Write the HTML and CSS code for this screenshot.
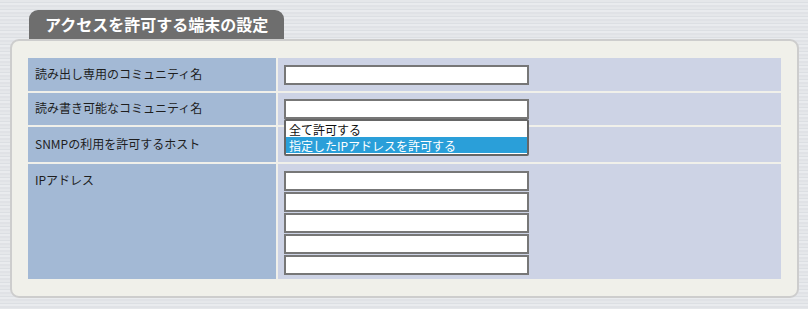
FILE: index.html
```html
<!DOCTYPE html>
<html lang="ja">

<head>
    <meta charset="UTF-8">
    <meta name="viewport" content="width=device-width, initial-scale=1.0">
    <title>アクセスを許可する端末の設定</title>
    <link rel="stylesheet" href="styles.css">
</head>

<body>
    <div class="page">
        <h2 class="tab">アクセスを許可する端末の設定</h2>
        <div class="panel">
            <div class="settings">
                <div class="label">読み出し専用のコミュニティ名</div>
                <div class="value">
                    <input type="text" class="input" />
                </div>

                <div class="label">読み書き可能なコミュニティ名</div>
                <div class="value">
                    <input type="text" class="input" />
                </div>

                <div class="label">SNMPの利用を許可するホスト</div>
                <div class="value value-top">
                    <select class="listbox" size="2">
                        <option>全て許可する</option>
                        <option selected>指定したIPアドレスを許可する</option>
                    </select>
                </div>

                <div class="label label-top">IPアドレス</div>
                <div class="value value-list">
                    <input type="text" class="input" />
                    <input type="text" class="input" />
                    <input type="text" class="input" />
                    <input type="text" class="input" />
                    <input type="text" class="input" />
                </div>
            </div>
        </div>
    </div>
</body>

</html>
```

FILE: styles.css
```css
body {
    margin: 0;
    font-family: "Noto Sans CJK JP", "Liberation Sans", sans-serif;
    font-size: 12px;
    color: #1e1e1e;
    background: repeating-linear-gradient(180deg,
            #e5e7ea 0, #e5e7ea 2px,
            #dcdfe3 2px, #dcdfe3 3px,
            #e9ebee 3px, #e9ebee 5px,
            #e0e2e6 5px, #e0e2e6 7px);
    height: 309px;
}

.page {
    padding-top: 10px;
}

.tab {
    margin: 0 0 0 29px;
    width: 255px;
    height: 29px;
    box-sizing: border-box;
    padding-left: 16px;
    background: #6e6e6e;
    border-radius: 9px 9px 0 0;
    color: #fff;
    font-size: 16px;
    font-weight: bold;
    line-height: 29px;
    position: relative;
    z-index: 1;
}

.panel {
    width: 789px;
    margin-left: 10px;
    box-sizing: border-box;
    background: #f0f0ea;
    border: 2px solid #cdcdcd;
    border-radius: 9px;
    padding: 17px 16px;
}

.settings {
    display: grid;
    grid-template-columns: 248px 503px;
    grid-template-rows: 33px 32px 35px 115px;
    gap: 2px;
}

.label {
    background: #a3b9d5;
    padding-left: 7px;
    display: flex;
    align-items: center;
    padding-bottom: 3px;
}

.label-top {
    align-items: flex-start;
    padding-top: 7px;
}

.value {
    background: #cdd3e5;
    padding-left: 6px;
    display: flex;
    align-items: center;
}

.value-top {
    align-items: flex-start;
}

.value-list {
    flex-direction: column;
    align-items: flex-start;
    gap: 1px;
    padding-top: 7px;
}

.input {
    width: 245px;
    height: 20px;
    box-sizing: border-box;
    margin: 0;
    border: 2px solid #777;
    background: #fff;
}

.listbox {
    width: 245px;
    height: 37px;
    box-sizing: border-box;
    margin: -8px 0 0 0;
    padding: 0;
    border: 2px solid #666;
    background: #fff;
    font-family: "Noto Sans CJK JP", "Liberation Sans", sans-serif;
    font-size: 12px;
    color: #111;
    overflow: hidden;
    outline: none;
}

.listbox option {
    height: 16px;
    line-height: 16px;
    padding: 0 3px;
}

.listbox option:checked {
    background: linear-gradient(#2a9fd9, #2a9fd9);
    color: #fff;
}
```
